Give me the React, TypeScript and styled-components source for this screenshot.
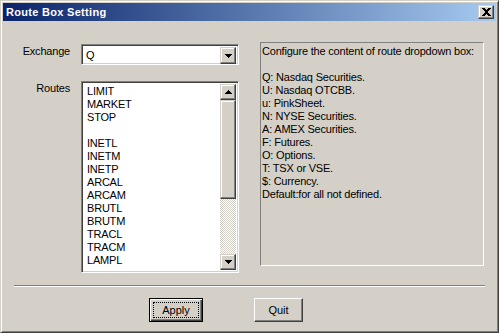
import React from 'react';
import styled, { createGlobalStyle, css } from 'styled-components';

const GlobalStyle = createGlobalStyle`
  * { box-sizing: border-box; }
  html, body { margin: 0; padding: 0; background: #d4d0c8; }
  body {
    font-family: 'Liberation Sans', Arial, sans-serif;
    font-size: 11px;
    letter-spacing: -0.2px;
    color: #000;
  }
`;

const raised = css`
  border: 1px solid;
  border-color: #fff #404040 #404040 #fff;
  box-shadow: inset -1px -1px #808080, inset 1px 1px #d4d0c8;
  background: #d4d0c8;
`;

const raisedSmall = css`
  border: 1px solid;
  border-color: #d4d0c8 #404040 #404040 #d4d0c8;
  box-shadow: inset -1px -1px #808080, inset 1px 1px #fff;
  background: #d4d0c8;
`;

const sunken = css`
  border: 1px solid;
  border-color: #808080 #fff #fff #808080;
  box-shadow: inset 1px 1px #404040, inset -1px -1px #d4d0c8;
`;

const Window = styled.div`
  width: 499px;
  height: 333px;
  display: flex;
  flex-direction: column;
  background: #d4d0c8;
  border: 1px solid;
  border-color: #d4d0c8 #404040 #404040 #d4d0c8;
  box-shadow: inset 1px 1px #fff, inset -1px -1px #808080;
  padding: 2px;
`;

const TitleBar = styled.div`
  height: 18px;
  display: flex;
  align-items: center;
  padding: 0 2px 0 3px;
  background: linear-gradient(to right, #0a246a, #a6caf0);
`;

const Title = styled.span`
  color: #fff;
  font-weight: bold;
  letter-spacing: 0.3px;
`;

const CloseButton = styled.button`
  ${raisedSmall};
  margin-left: auto;
  width: 16px;
  height: 14px;
  padding: 0;
  display: flex;
  align-items: center;
  justify-content: center;
`;

const Body = styled.div`
  flex: 1;
  display: flex;
  flex-direction: column;
  padding: 21px 11px 0 11px;
`;

const Main = styled.div`
  display: flex;
  align-items: flex-start;
`;

const Form = styled.div`
  display: grid;
  grid-template-columns: 56px 158px;
  column-gap: 11px;
  row-gap: 16px;
  margin-top: 2px;
`;

const Label = styled.label<{ $offset?: number }>`
  text-align: right;
  line-height: 13px;
  padding-top: ${(p) => p.$offset ?? 0}px;
`;

const Combo = styled.div`
  ${sunken};
  height: 21px;
  display: flex;
  background: #fff;
  padding: 2px;
`;

const ComboValue = styled.div`
  flex: 1;
  line-height: 17px;
  padding-left: 2px;
`;

const ArrowButton = styled.div<{ $h?: number }>`
  ${raisedSmall};
  width: 16px;
  height: ${(p) => p.$h ?? 16}px;
  flex-shrink: 0;
  display: flex;
  align-items: center;
  justify-content: center;
`;

const ListBox = styled.div`
  ${sunken};
  height: 192px;
  background: #fff;
  padding: 2px;
  display: flex;
`;

const Items = styled.div`
  flex: 1;
  padding: 1px 0 0 3px;
  overflow: hidden;
`;

const Item = styled.div`
  height: 13px;
  line-height: 13px;
  white-space: nowrap;
`;

const ScrollBar = styled.div`
  width: 16px;
  display: flex;
  flex-direction: column;
`;

const Thumb = styled.div`
  ${raisedSmall};
  height: 99px;
`;

const Track = styled.div`
  flex: 1;
  background: repeating-conic-gradient(#d4d0c8 0 25%, #fff 0 50%) 0 0 / 2px 2px;
`;

const InfoPanel = styled.div`
  margin-left: 21px;
  width: 224px;
  height: 224px;
  border: 1px solid;
  border-color: #808080 #fff #fff #808080;
  padding: 2px 1px 0;
`;

const InfoLine = styled.div`
  height: 13px;
  line-height: 13px;
  white-space: nowrap;
`;

const Separator = styled.div`
  margin-top: 12px;
  border-top: 1px solid #808080;
  border-bottom: 1px solid #fff;
`;

const Actions = styled.div`
  display: flex;
  gap: 51px;
  margin-top: 11px;
  padding-left: 135px;
`;

const PushButton = styled.button<{ $w: number; $default?: boolean }>`
  width: ${(p) => p.$w}px;
  height: 24px;
  padding: 0;
  font: inherit;
  color: #000;
  display: flex;
  align-items: center;
  justify-content: center;
  ${(p) =>
    p.$default
      ? css`
          border: 1px solid #000;
          background: #d4d0c8;
          box-shadow: inset 1px 1px #fff, inset -1px -1px #404040, inset -2px -2px #808080;
        `
      : raised}
`;

const FocusRing = styled.span`
  display: flex;
  align-items: center;
  justify-content: center;
  width: calc(100% - 6px);
  height: calc(100% - 6px);
  border: 1px dotted #000;
`;

const Arrow = ({ up }: { up?: boolean }) => (
  <svg width="7" height="4" viewBox="0 0 7 4" shapeRendering="crispEdges" style={{ transform: up ? 'scaleY(-1)' : undefined }}>
    <rect x="0" y="0" width="7" height="1" fill="#000" />
    <rect x="1" y="1" width="5" height="1" fill="#000" />
    <rect x="2" y="2" width="3" height="1" fill="#000" />
    <rect x="3" y="3" width="1" height="1" fill="#000" />
  </svg>
);

const CloseGlyph = () => (
  <svg width="9" height="8" viewBox="0 0 9 8" shapeRendering="crispEdges">
    <path
      d="M0 0h3v1h-3zM1 1h3v1h-3zM2 2h5v1h-5zM3 3h3v2h-3zM2 5h5v1h-5zM1 6h3v1h-3zM0 7h3v1h-3zM6 0h3v1h-3zM5 1h3v1h-3zM5 6h3v1h-3zM6 7h3v1h-3z"
      fill="#000"
    />
  </svg>
);

const routes = [
  'LIMIT', 'MARKET', 'STOP', '', 'INETL', 'INETM', 'INETP', 'ARCAL',
  'ARCAM', 'BRUTL', 'BRUTM', 'TRACL', 'TRACM', 'LAMPL',
];

const info = [
  'Configure the content of route dropdown box:',
  '',
  'Q: Nasdaq Securities.',
  'U: Nasdaq OTCBB.',
  'u: PinkSheet.',
  'N: NYSE Securities.',
  'A: AMEX Securities.',
  'F: Futures.',
  'O: Options.',
  'T: TSX or VSE.',
  '$: Currency.',
  'Default:for all not defined.',
];

export default function App() {
  return (
    <>
      <GlobalStyle />
      <Window>
        <TitleBar>
          <Title>Route Box Setting</Title>
          <CloseButton aria-label="Close">
            <CloseGlyph />
          </CloseButton>
        </TitleBar>

        <Body>
          <Main>
            <Form>
              <Label $offset={1}>Exchange</Label>
              <Combo>
                <ComboValue>Q</ComboValue>
                <ArrowButton $h={17}>
                  <Arrow />
                </ArrowButton>
              </Combo>

              <Label $offset={1}>Routes</Label>
              <ListBox>
                <Items>
                  {routes.map((r, i) => (
                    <Item key={i}>{r || '\u00a0'}</Item>
                  ))}
                </Items>
                <ScrollBar>
                  <ArrowButton>
                    <Arrow up />
                  </ArrowButton>
                  <Thumb />
                  <Track />
                  <ArrowButton>
                    <Arrow />
                  </ArrowButton>
                </ScrollBar>
              </ListBox>
            </Form>

            <InfoPanel>
              {info.map((line, i) => (
                <InfoLine key={i}>{line || '\u00a0'}</InfoLine>
              ))}
            </InfoPanel>
          </Main>

          <Separator />

          <Actions>
            <PushButton $w={54} $default>
              <FocusRing>Apply</FocusRing>
            </PushButton>
            <PushButton $w={49}>Quit</PushButton>
          </Actions>
        </Body>
      </Window>
    </>
  );
}
